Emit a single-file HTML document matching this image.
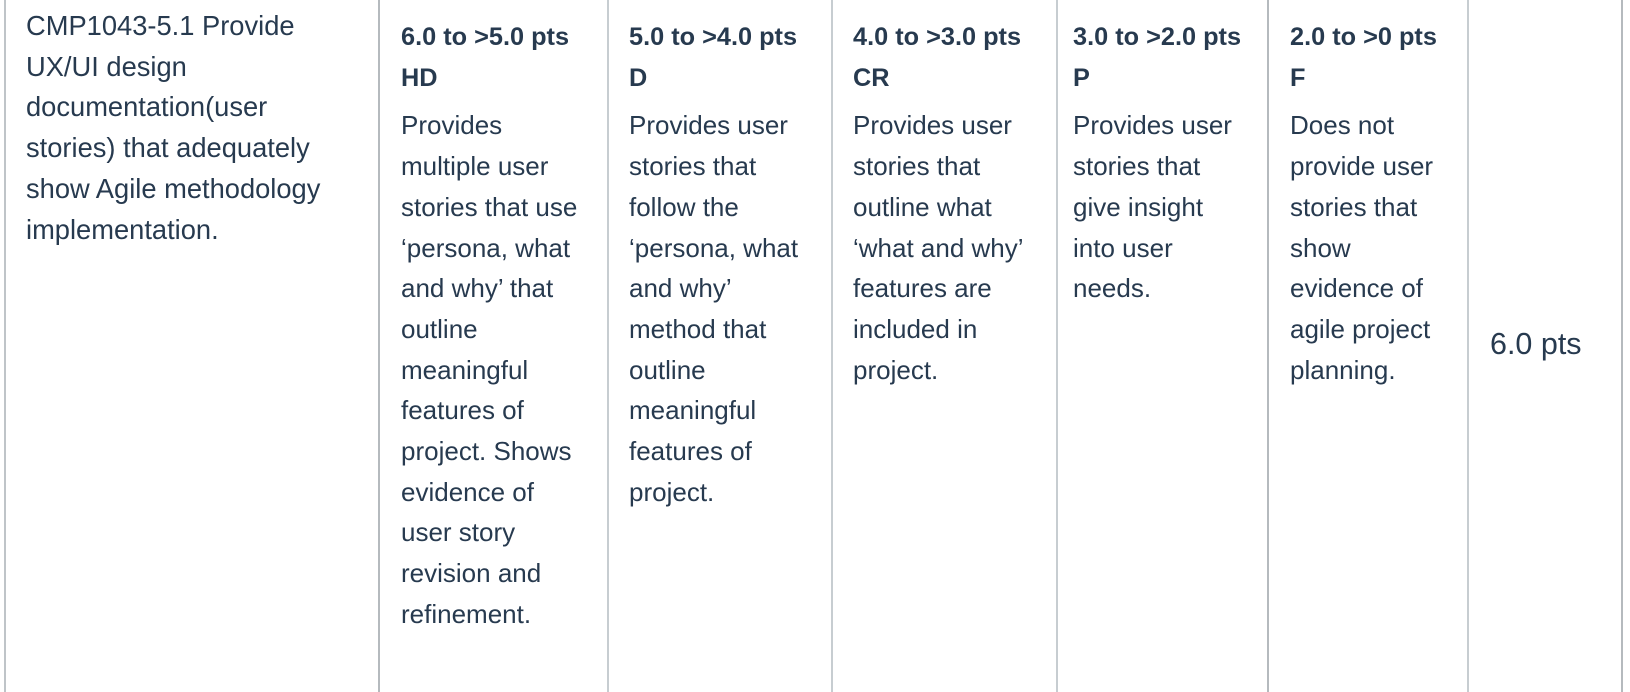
<!DOCTYPE html>
<html><head><meta charset="utf-8"><style>
html,body{margin:0;padding:0;background:#fff;width:1630px;height:692px;overflow:hidden}
body{font-family:"Liberation Sans",sans-serif;color:#273a4f;position:relative}
.v{position:absolute;top:0;height:692px;width:2px;background:#c7cdd1}
.c{position:absolute;font-size:26px;line-height:40.7px;white-space:nowrap}
.b{font-weight:bold;font-size:25.3px;display:block;margin-bottom:7px}
.p{position:absolute;font-size:30.5px;left:1490px;top:326px;line-height:36px}
</style></head><body>
<div class="v" style="left:4px;background:#bfc4c8"></div>
<div class="v" style="left:378px;background:#b5babe"></div>
<div class="v" style="left:607px"></div>
<div class="v" style="left:831px"></div>
<div class="v" style="left:1056px"></div>
<div class="v" style="left:1267px;background:#b5babe"></div>
<div class="v" style="left:1467px"></div>
<div class="v" style="left:1621px;background:#b5babe"></div>

<div class="c" style="left:26px;top:6px;font-size:27.3px">CMP1043-5.1 Provide<br>UX/UI design<br>documentation(user<br>stories) that adequately<br>show Agile methodology<br>implementation.</div>

<div class="c" style="left:401px;top:17px"><span class="b">6.0 to &gt;5.0 pts<br>HD</span>Provides<br>multiple user<br>stories that use<br>‘persona, what<br>and why’ that<br>outline<br>meaningful<br>features of<br>project. Shows<br>evidence of<br>user story<br>revision and<br>refinement.</div>

<div class="c" style="left:629px;top:17px"><span class="b">5.0 to &gt;4.0 pts<br>D</span>Provides user<br>stories that<br>follow the<br>‘persona, what<br>and why’<br>method that<br>outline<br>meaningful<br>features of<br>project.</div>

<div class="c" style="left:853px;top:17px"><span class="b">4.0 to &gt;3.0 pts<br>CR</span>Provides user<br>stories that<br>outline what<br>‘what and why’<br>features are<br>included in<br>project.</div>

<div class="c" style="left:1073px;top:17px"><span class="b">3.0 to &gt;2.0 pts<br>P</span>Provides user<br>stories that<br>give insight<br>into user<br>needs.</div>

<div class="c" style="left:1290px;top:17px"><span class="b">2.0 to &gt;0 pts<br>F</span>Does not<br>provide user<br>stories that<br>show<br>evidence of<br>agile project<br>planning.</div>

<div class="p">6.0 pts</div>
</body></html>
